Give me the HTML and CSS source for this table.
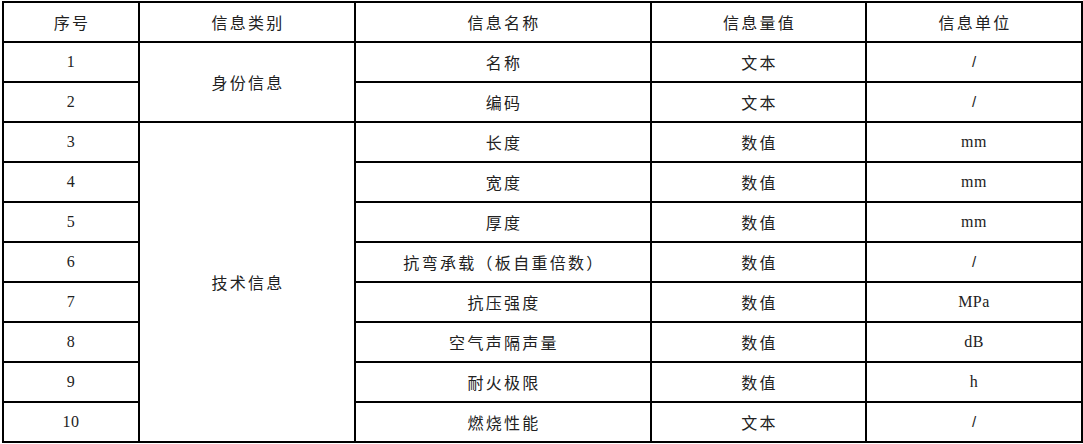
FILE: index.html
```html
<!DOCTYPE html>
<html lang="zh-CN">
<head>
<meta charset="utf-8">
<title>信息表</title>
<link rel="stylesheet" href="styles.css">
</head>
<body>
<table class="info-table">
  <colgroup>
    <col class="c1"><col class="c2"><col class="c3"><col class="c4"><col class="c5">
  </colgroup>
  <thead>
    <tr>
      <th class="zh">序号</th>
      <th class="zh">信息类别</th>
      <th class="zh">信息名称</th>
      <th class="zh">信息量值</th>
      <th class="zh">信息单位</th>
    </tr>
  </thead>
  <tbody>
    <tr><td class="num">1</td><td class="zh" rowspan="2">身份信息</td><td class="zh">名称</td><td class="zh">文本</td><td class="slash">/</td></tr>
    <tr><td class="num">2</td><td class="zh">编码</td><td class="zh">文本</td><td class="slash">/</td></tr>
    <tr><td class="num">3</td><td class="zh" rowspan="8">技术信息</td><td class="zh">长度</td><td class="zh">数值</td><td class="num">mm</td></tr>
    <tr><td class="num">4</td><td class="zh">宽度</td><td class="zh">数值</td><td class="num">mm</td></tr>
    <tr><td class="num">5</td><td class="zh">厚度</td><td class="zh">数值</td><td class="num">mm</td></tr>
    <tr><td class="num">6</td><td class="zh">抗弯承载（板自重倍数）</td><td class="zh">数值</td><td class="slash">/</td></tr>
    <tr><td class="num">7</td><td class="zh">抗压强度</td><td class="zh">数值</td><td class="num">MPa</td></tr>
    <tr><td class="num">8</td><td class="zh">空气声隔声量</td><td class="zh">数值</td><td class="num">dB</td></tr>
    <tr><td class="num">9</td><td class="zh">耐火极限</td><td class="zh">数值</td><td class="num">h</td></tr>
    <tr><td class="num">10</td><td class="zh">燃烧性能</td><td class="zh">文本</td><td class="slash">/</td></tr>
  </tbody>
</table>
</body>
</html>
```
FILE: styles.css
```css
html, body {
  margin: 0;
  padding: 0;
  background: #ffffff;
}

.info-table {
  margin: 1px 0 0 2px;
  width: 1081px;
  table-layout: fixed;
  border-collapse: separate;
  border-spacing: 0;
  border-left: 2px solid #000;
  border-top: 2px solid #000;
  color: #222;
}

.c1 { width: 136px; }
.c2 { width: 216px; }
.c3 { width: 296px; }
.c4 { width: 215px; }
.c5 { width: 216px; }

.info-table th,
.info-table td {
  box-sizing: border-box;
  height: 40px;
  padding: 0;
  border-right: 2px solid #000;
  border-bottom: 2px solid #000;
  text-align: center;
  vertical-align: middle;
  font-weight: normal;
  line-height: 20px;
}

.zh {
  font-family: "Noto Sans CJK SC", "Liberation Serif", sans-serif;
  font-size: 16px;
  letter-spacing: 2.3px;
  text-indent: 2px;
}

.num {
  font-family: "Liberation Serif", serif;
  font-size: 16px;
  letter-spacing: 0.5px;
}

.slash {
  font-family: "Liberation Sans", sans-serif;
  font-size: 15px;
}
```
